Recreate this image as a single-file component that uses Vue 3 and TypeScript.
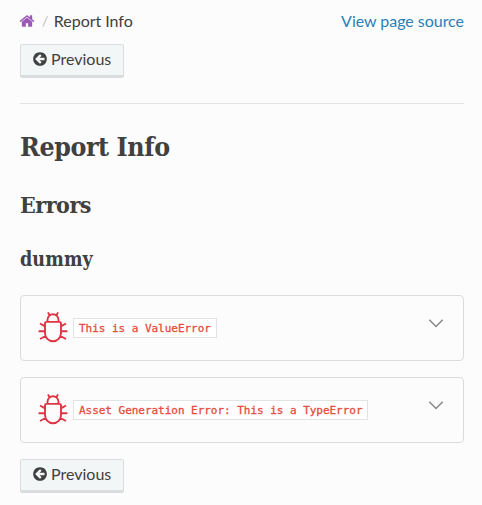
<script setup lang="ts">
import { ref } from 'vue'

interface ReportError {
  id: number
  message: string
}

const errors: ReportError[] = [
  { id: 1, message: 'This is a ValueError' },
  { id: 2, message: 'Asset Generation Error: This is a TypeError' },
]

const arrow =
  'M1408 960v-128q0-26-19-45t-45-19h-502l189-189q19-19 19-45t-19-45l-91-91q-18-18-45-18t-45 18l-362 362-91 91q-18 18-18 45t18 45l91 91 362 362q18 18 45 18t45-18l91-91q18-18 18-45t-18-45l-189-189h502q26 0 45-19t19-45zm256-64q0 209-103 385.5t-279.5 279.5-385.5 103-385.5-103-279.5-279.5-103-385.5 103-385.5 279.5-279.5 385.5-103 385.5 103 279.5 279.5 103 385.5z'

const home =
  'M1472 992v480q0 26-19 45t-45 19h-384v-384h-256v384h-384q-26 0-45-19t-19-45v-480q0-1 .5-3t.5-3l575-474 575 474q1 2 1 6zm223-69l-62 74q-8 9-21 11h-3q-13 0-21-7l-692-577-692 577q-12 8-24 7-13-2-21-11l-62-74q-8-10-7-23.5t11-21.5l719-599q32-26 76-26t76 26l244 204v-195q0-14 9-23t23-9h192q14 0 23 9t9 23v408l219 182q10 8 11 21.5t-7 23.5z'

const selected = ref<number | null>(null)

function toggle(id: number): void {
  selected.value = selected.value === id ? null : id
}
</script>

<template>
  <div class="page">
    <header class="crumbs">
      <svg class="home" viewBox="0 0 1792 1792"><path :d="home" /></svg>
      <span class="sep">/</span>
      <span class="current">Report Info</span>
      <a class="source">View page source</a>
    </header>
    <a class="btn"><svg viewBox="0 0 1792 1792"><path :d="arrow" /></svg><span>Previous</span></a>
    <hr class="rule" />
    <main>
      <h1>Report Info</h1>
      <h2>Errors</h2>
      <h3>dummy</h3>
      <section v-for="error in errors" :key="error.id" class="card" @click="toggle(error.id)">
        <svg class="bug" viewBox="0 0 30 32">
          <path d="M9.5 10.5V8.8a5.5 5.5 0 0 1 11 0v1.7M8.6 10.9h12.8q1.6 0 1.6 1.6v9.4a8 8.4 0 0 1-16 0v-9.4q0-1.6 1.6-1.6zM11.5 4.3 10 1.4M18.5 4.3 20 1.4M7 15.4 2 12.5M7 20.3H.6M7.6 25 2 28M23 15.4l5-2.9M23 20.3h6.4M22.4 25l5.6 3" />
        </svg>
        <code>{{ error.message }}</code>
        <svg class="chevron" viewBox="0 0 16 10"><path d="m1.3 .8 6.7 6.7 6.7-6.7" /></svg>
      </section>
    </main>
    <a class="btn"><svg viewBox="0 0 1792 1792"><path :d="arrow" /></svg><span>Previous</span></a>
  </div>
</template>

<style>
body {
  background: #fcfcfc;
}
</style>

<style scoped>
.page {
  box-sizing: border-box;
  height: 505px;
  padding: 9px 18px 0 20px;
  overflow: hidden;
  color: #404040;
  font: 16px/24px Lato, "Liberation Sans", sans-serif;
}
.crumbs {
  display: flex;
  height: 24px;
  margin-bottom: 11px;
}
.home {
  width: 16px;
  height: 16px;
  margin: 4px 0 0 -1px;
  fill: #9b59b6;
}
.sep {
  margin: 0 6px 0 7px;
  color: #bbb;
  font-size: 14px;
}
.current {
  margin-left: -0.5px;
  letter-spacing: -0.03px;
}
.source {
  margin-left: auto;
  color: #2980b9;
  letter-spacing: -0.03px;
}
.btn {
  box-sizing: border-box;
  display: flex;
  width: 104px;
  height: 34px;
  padding: 2px 0 0 11px;
  border: 1px solid #d9dddd;
  border-bottom-width: 3px;
  border-radius: 2px;
  background: #f3f6f6;
}
.btn svg {
  width: 16px;
  height: 16px;
  margin: 4px 3px 0 0;
  fill: #404040;
}
.rule {
  height: 1px;
  margin: 25px 0 24px;
  border: 0;
  background: #e1e4e5;
}
h1,
h2,
h3 {
  margin: 0;
  font-family: "Roboto Slab", "DejaVu Serif Condensed", "DejaVu Serif", serif;
  font-weight: 700;
  font-stretch: condensed;
}
h1 {
  height: 58px;
  font-size: 26.5px;
  line-height: 38px;
  letter-spacing: -0.4px;
}
h2 {
  height: 54px;
  font-size: 23px;
  line-height: 38px;
  letter-spacing: -0.5px;
}
h3 {
  height: 55px;
  font-size: 19.5px;
  line-height: 39px;
  letter-spacing: 0.1px;
}
.card {
  box-sizing: border-box;
  display: flex;
  height: 66px;
  margin-bottom: 16px;
  padding: 15px 19px 0 17px;
  border: 1px solid #dbdbdb;
  border-radius: 4px;
}
.bug {
  width: 30px;
  height: 32px;
}
.bug path,
.chevron path {
  fill: none;
  stroke: #dc3545;
  stroke-width: 1.9;
}
code {
  box-sizing: border-box;
  height: 20px;
  margin: 7px 0 0 5px;
  padding: 0 5px;
  border: 1px solid #e1e4e5;
  background: #fff;
  color: #e74c3c;
  font: 11px/19px "DejaVu Sans Mono", "Liberation Mono", monospace;
  letter-spacing: -0.03px;
  -webkit-text-stroke: 0.3px #e74c3c;
  white-space: nowrap;
}
.chevron {
  width: 16px;
  height: 10px;
  margin: 8px 0 0 auto;
}
.chevron path {
  stroke: #888;
  stroke-width: 1.5;
}
</style>
